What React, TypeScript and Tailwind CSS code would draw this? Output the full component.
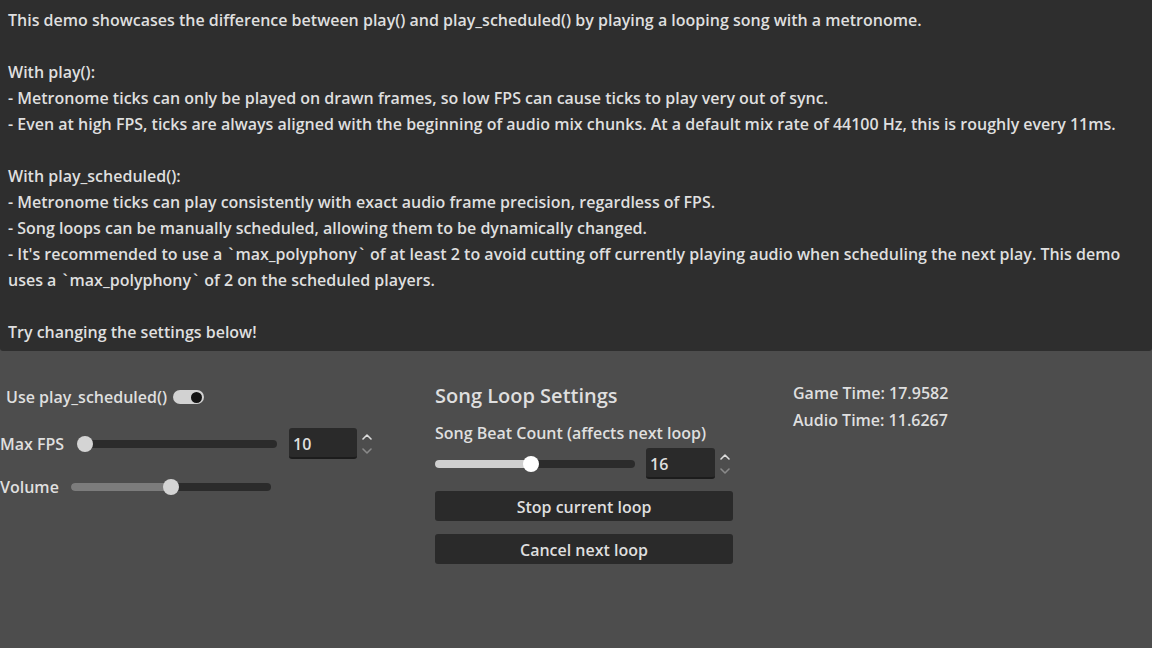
import React from "react";

const lines: string[] = [
  "This demo showcases the difference between play() and play_scheduled() by playing a looping song with a metronome.",
  "",
  "With play():",
  "- Metronome ticks can only be played on drawn frames, so low FPS can cause ticks to play very out of sync.",
  "- Even at high FPS, ticks are always aligned with the beginning of audio mix chunks. At a default mix rate of 44100 Hz, this is roughly every 11ms.",
  "",
  "With play_scheduled():",
  "- Metronome ticks can play consistently with exact audio frame precision, regardless of FPS.",
  "- Song loops can be manually scheduled, allowing them to be dynamically changed.",
  "- It's recommended to use a `max_polyphony` of at least 2 to avoid cutting off currently playing audio when scheduling the next play. This demo",
  "uses a `max_polyphony` of 2 on the scheduled players.",
  "",
  "Try changing the settings below!",
];

function Line({ text }: { text: string }) {
  const parts = text.split("`");
  return (
    <>
      {parts.map((p, i) => (
        <React.Fragment key={i}>
          {i > 0 && <span className="inline-block w-[9px] text-center">`</span>}
          {p}
        </React.Fragment>
      ))}
    </>
  );
}

function Arrows() {
  return (
    <div className="flex flex-col items-center justify-center gap-[8px] w-[12px]">
      <svg width="10" height="6" viewBox="0 0 10 6">
        <path d="M1 5 L5 1 L9 5" fill="none" stroke="#dcdcdc" strokeWidth="1.6" strokeLinecap="round" strokeLinejoin="round" />
      </svg>
      <svg width="10" height="6" viewBox="0 0 10 6">
        <path d="M1 1 L5 5 L9 1" fill="none" stroke="#8a8a8a" strokeWidth="1.6" strokeLinecap="round" strokeLinejoin="round" />
      </svg>
    </div>
  );
}

function SpinBox({ value, width }: { value: string; width: string }) {
  return (
    <div className="flex items-center gap-[4px]">
      <div className={`${width} h-[31px] rounded-[3px] bg-[#2a2a2a] border-b-2 border-[#1c1c1c] flex items-center pl-[4px] pt-[2px] text-[16px] leading-none`}>
        {value}
      </div>
      <Arrows />
    </div>
  );
}

function Slider({
  width,
  pct,
  fill,
  grab,
}: {
  width: number;
  pct: number;
  fill: string;
  grab: string;
}) {
  const w = width;
  const pos = pct * w;
  return (
    <div className="relative h-[16px]" style={{ width: w }}>
      <div className="absolute left-0 right-0 top-[4px] h-[8px] rounded-full bg-[#2b2b2b]" />
      <div
        className={`absolute left-0 top-[4px] h-[8px] rounded-full ${fill}`}
        style={{ width: Math.max(pos, 0) }}
      />
      <div
        className={`absolute top-0 w-[16px] h-[16px] rounded-full ${grab}`}
        style={{ left: Math.max(pos - 8, -1) }}
      />
    </div>
  );
}

export default function App() {
  return (
    <div
      className="w-[1152px] h-[648px] bg-[#4d4d4d] text-[#dfdfdf] overflow-hidden font-semibold"
      style={{ fontFamily: '"Open Sans", "Noto Sans", sans-serif' }}
    >
      <div className="bg-[#2e2e2e] rounded-b-[3px] px-[8px] pt-[7px] pb-[6px] text-[16px] leading-[26px]">
        {lines.map((l, i) => (
          <div key={i} className="h-[26px] whitespace-nowrap">
            <Line text={l} />
          </div>
        ))}
      </div>

      <div className="flex text-[16px]">
        {/* left column */}
        <div className="w-[435px] flex flex-col">
          <div className="mt-[34px] h-[24px] flex items-center pl-[6px]">
            <span className="leading-none">Use play_scheduled()</span>
            <div className="ml-[6px] w-[31px] h-[14px] rounded-full bg-[#d2d2d2] flex items-center justify-end pr-[2px]">
              <div className="w-[11px] h-[11px] rounded-full bg-[#141414]" />
            </div>
          </div>
          <div className="mt-[19px] h-[31px] flex items-center">
            <span className="w-[78px] leading-none">Max FPS</span>
            <Slider width={199} pct={0.035} fill="bg-[#6e6e6e]" grab="bg-[#d4d4d4]" />
            <div className="ml-[12px]">
              <SpinBox value="10" width="w-[68px]" />
            </div>
          </div>
          <div className="mt-[16px] h-[24px] flex items-center">
            <span className="w-[71px] leading-none">Volume</span>
            <Slider width={200} pct={0.5} fill="bg-[#7c7c7c]" grab="bg-[#d4d4d4]" />
          </div>
        </div>

        {/* middle column */}
        <div className="w-[298px] flex flex-col">
          <div className="mt-[31px] h-[28px] leading-[28px] text-[20px]">Song Loop Settings</div>
          <div className="mt-[10px] h-[26px] leading-[26px]">Song Beat Count (affects next loop)</div>
          <div className="mt-[2px] h-[31px] flex items-center">
            <Slider width={200} pct={0.48} fill="bg-[#cfcfcf]" grab="bg-[#ffffff]" />
            <div className="ml-[11px]">
              <SpinBox value="16" width="w-[69px]" />
            </div>
          </div>
          <div className="mt-[12px] h-[30px] rounded-[3px] bg-[#2a2a2a] flex items-center justify-center pt-[1px]">
            Stop current loop
          </div>
          <div className="mt-[13px] h-[30px] rounded-[3px] bg-[#2a2a2a] flex items-center justify-center pt-[1px]">
            Cancel next loop
          </div>
        </div>

        {/* right column */}
        <div className="ml-[60px] mt-[29px] leading-[27px]">
          <div>Game Time: 17.9582</div>
          <div>Audio Time: 11.6267</div>
        </div>
      </div>
    </div>
  );
}
